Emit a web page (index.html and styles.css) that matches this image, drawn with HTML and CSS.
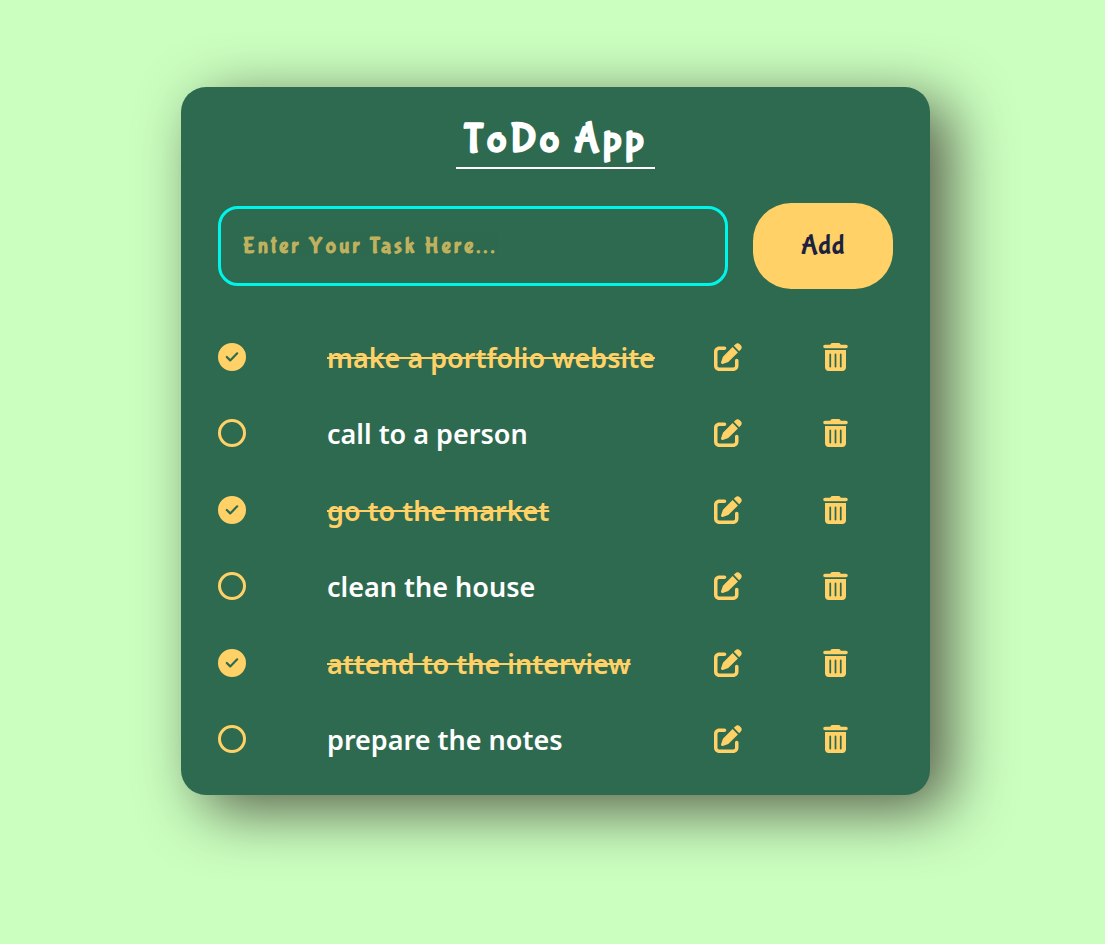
FILE: index.html
```html
<!DOCTYPE html>
<html lang="en">
<head>
<meta charset="utf-8">
<meta name="viewport" content="width=device-width, initial-scale=1">
<title>ToDo App</title>
<link rel="stylesheet" href="styles.css">
</head>
<body>
<svg class="sprite" aria-hidden="true">
  <symbol id="edit" viewBox="0 0 512 512"><path d="M471.6 21.7c-21.9-21.9-57.3-21.9-79.2 0L362.3 51.7l97.9 97.9 30.1-30.1c21.9-21.9 21.9-57.3 0-79.2L471.6 21.7zm-299.2 220c-6.1 6.1-10.8 13.6-13.5 21.9l-29.6 88.8c-2.9 8.6-.6 18.1 5.8 24.6s15.9 8.7 24.6 5.8l88.8-29.6c8.2-2.7 15.7-7.4 21.9-13.5L437.7 172.3 339.7 74.3 172.4 241.7zM96 64C43 64 0 107 0 160V416c0 53 43 96 96 96H352c53 0 96-43 96-96V320c0-17.7-14.3-32-32-32s-32 14.3-32 32v96c0 17.7-14.3 32-32 32H96c-17.7 0-32-14.3-32-32V160c0-17.7 14.3-32 32-32h96c17.7 0 32-14.3 32-32s-14.3-32-32-32H96z"/></symbol>
  <symbol id="trash" viewBox="0 0 448 512"><path d="M135.2 17.7C140.6 6.8 151.7 0 163.8 0H284.2c12.1 0 23.2 6.8 28.6 17.7L320 32h96c17.7 0 32 14.3 32 32s-14.3 32-32 32H32C14.3 96 0 81.7 0 64S14.3 32 32 32h96l7.2-14.3zM32 128H416V448c0 35.3-28.7 64-64 64H96c-35.3 0-64-28.7-64-64V128zm96 64c-8.8 0-16 7.2-16 16V432c0 8.8 7.2 16 16 16s16-7.2 16-16V208c0-8.8-7.2-16-16-16zm96 0c-8.8 0-16 7.2-16 16V432c0 8.8 7.2 16 16 16s16-7.2 16-16V208c0-8.8-7.2-16-16-16zm96 0c-8.8 0-16 7.2-16 16V432c0 8.8 7.2 16 16 16s16-7.2 16-16V208c0-8.8-7.2-16-16-16z"/></symbol>
  <symbol id="tick" viewBox="0 0 28 28"><path d="M8.8 14l3.4 3.4 7-7.1" fill="none" stroke="#2d6a4f" stroke-width="2.2" stroke-linecap="round" stroke-linejoin="round"/></symbol>
</svg>
<main class="card">
  <h1 class="title">ToDo App</h1>
  <form class="entry">
    <input class="entry-field" type="text" aria-label="New task" placeholder="Enter Your Task Here...">
    <button class="entry-add" type="button">Add</button>
  </form>
  <ul class="tasks">
    <li class="task">
      <span class="check"><input class="check-box" type="checkbox" id="t1" checked><svg class="check-tick"><use href="#tick"/></svg></span>
      <label class="task-name" for="t1">make a portfolio website</label>
      <button class="icon-button" type="button" aria-label="Edit"><svg class="icon"><use href="#edit"/></svg></button>
      <button class="icon-button" type="button" aria-label="Delete"><svg class="icon icon-trash"><use href="#trash"/></svg></button>
    </li>
    <li class="task">
      <span class="check"><input class="check-box" type="checkbox" id="t2"><svg class="check-tick"><use href="#tick"/></svg></span>
      <label class="task-name" for="t2">call to a person</label>
      <button class="icon-button" type="button" aria-label="Edit"><svg class="icon"><use href="#edit"/></svg></button>
      <button class="icon-button" type="button" aria-label="Delete"><svg class="icon icon-trash"><use href="#trash"/></svg></button>
    </li>
    <li class="task">
      <span class="check"><input class="check-box" type="checkbox" id="t3" checked><svg class="check-tick"><use href="#tick"/></svg></span>
      <label class="task-name" for="t3">go to the market</label>
      <button class="icon-button" type="button" aria-label="Edit"><svg class="icon"><use href="#edit"/></svg></button>
      <button class="icon-button" type="button" aria-label="Delete"><svg class="icon icon-trash"><use href="#trash"/></svg></button>
    </li>
    <li class="task">
      <span class="check"><input class="check-box" type="checkbox" id="t4"><svg class="check-tick"><use href="#tick"/></svg></span>
      <label class="task-name" for="t4">clean the house</label>
      <button class="icon-button" type="button" aria-label="Edit"><svg class="icon"><use href="#edit"/></svg></button>
      <button class="icon-button" type="button" aria-label="Delete"><svg class="icon icon-trash"><use href="#trash"/></svg></button>
    </li>
    <li class="task">
      <span class="check"><input class="check-box" type="checkbox" id="t5" checked><svg class="check-tick"><use href="#tick"/></svg></span>
      <label class="task-name" for="t5">attend to the interview</label>
      <button class="icon-button" type="button" aria-label="Edit"><svg class="icon"><use href="#edit"/></svg></button>
      <button class="icon-button" type="button" aria-label="Delete"><svg class="icon icon-trash"><use href="#trash"/></svg></button>
    </li>
    <li class="task">
      <span class="check"><input class="check-box" type="checkbox" id="t6"><svg class="check-tick"><use href="#tick"/></svg></span>
      <label class="task-name" for="t6">prepare the notes</label>
      <button class="icon-button" type="button" aria-label="Edit"><svg class="icon"><use href="#edit"/></svg></button>
      <button class="icon-button" type="button" aria-label="Delete"><svg class="icon icon-trash"><use href="#trash"/></svg></button>
    </li>
  </ul>
</main>
</body>
</html>
```
FILE: styles.css
```css
* {
  box-sizing: border-box;
}

body {
  margin: 0;
  padding: 87px 175px 87px 181px;
  min-height: 100vh;
  background: #caffbf;
  font-family: "Noto Sans", sans-serif;
}

.sprite {
  display: none;
}

.card {
  display: flex;
  flex-direction: column;
  padding: 28px 37px 37px;
  border-radius: 25px;
  background: #2d6a4f;
  box-shadow: 20px 15px 60px rgba(50, 40, 36, 0.75);
}

.title {
  align-self: center;
  margin: 0 0 34px;
  padding: 0 8px 2px;
  border-bottom: 2px solid #fff;
  color: #fff;
  font: 700 42px/50px "Bubblegum Sans", "Caveat Brush", Lato, sans-serif;
  letter-spacing: 3px;
}

.entry {
  display: flex;
  align-items: center;
  gap: 25px;
  margin-bottom: 49px;
}

.entry-field {
  flex: 1;
  min-width: 0;
  height: 80px;
  padding: 0 22px;
  border: 3px solid #00f5ea;
  border-radius: 20px;
  outline: none;
  background: transparent;
  color: #ffd166;
  font: 700 22px/28px "Bubblegum Sans", "Caveat Brush", Lato, sans-serif;
  letter-spacing: 3px;
}

.entry-field::placeholder {
  color: #ffd166;
  opacity: 0.7;
}

.entry-add {
  width: 140px;
  height: 86px;
  border: 0;
  border-radius: 38px;
  background: #ffd166;
  color: #1d2140;
  font: 400 28px/36px "Bubblegum Sans", "Caveat Brush", Lato, sans-serif;
}

.tasks {
  display: grid;
  align-content: space-between;
  min-height: 420px;
  margin: 0;
  padding: 0;
  list-style: none;
}

.task {
  display: grid;
  grid-template-columns: 109px 1fr 109px 70px;
  align-items: center;
}

.check {
  display: grid;
  width: 28px;
  height: 28px;
}

.check-box {
  grid-area: 1 / 1;
  width: 28px;
  height: 28px;
  margin: 0;
  border: 3px solid #ffd166;
  border-radius: 50%;
  appearance: none;
}

.check-box:checked {
  background: #ffd166;
}

.check-tick {
  grid-area: 1 / 1;
  z-index: 1;
  width: 28px;
  height: 28px;
  pointer-events: none;
  visibility: hidden;
}

.check-box:checked + .check-tick {
  visibility: visible;
}

.task-name {
  padding-top: 2px;
  color: #fff;
  font-size: 27px;
  font-weight: 600;
  line-height: 36px;
}

.check:has(:checked) + .task-name {
  color: #ffd166;
  text-decoration: line-through;
}

.icon-button {
  display: flex;
  justify-self: start;
  padding: 0;
  border: 0;
  background: none;
}

.icon {
  width: 28px;
  height: 28px;
  fill: #ffd166;
}

.icon-trash {
  width: 25px;
}
```
